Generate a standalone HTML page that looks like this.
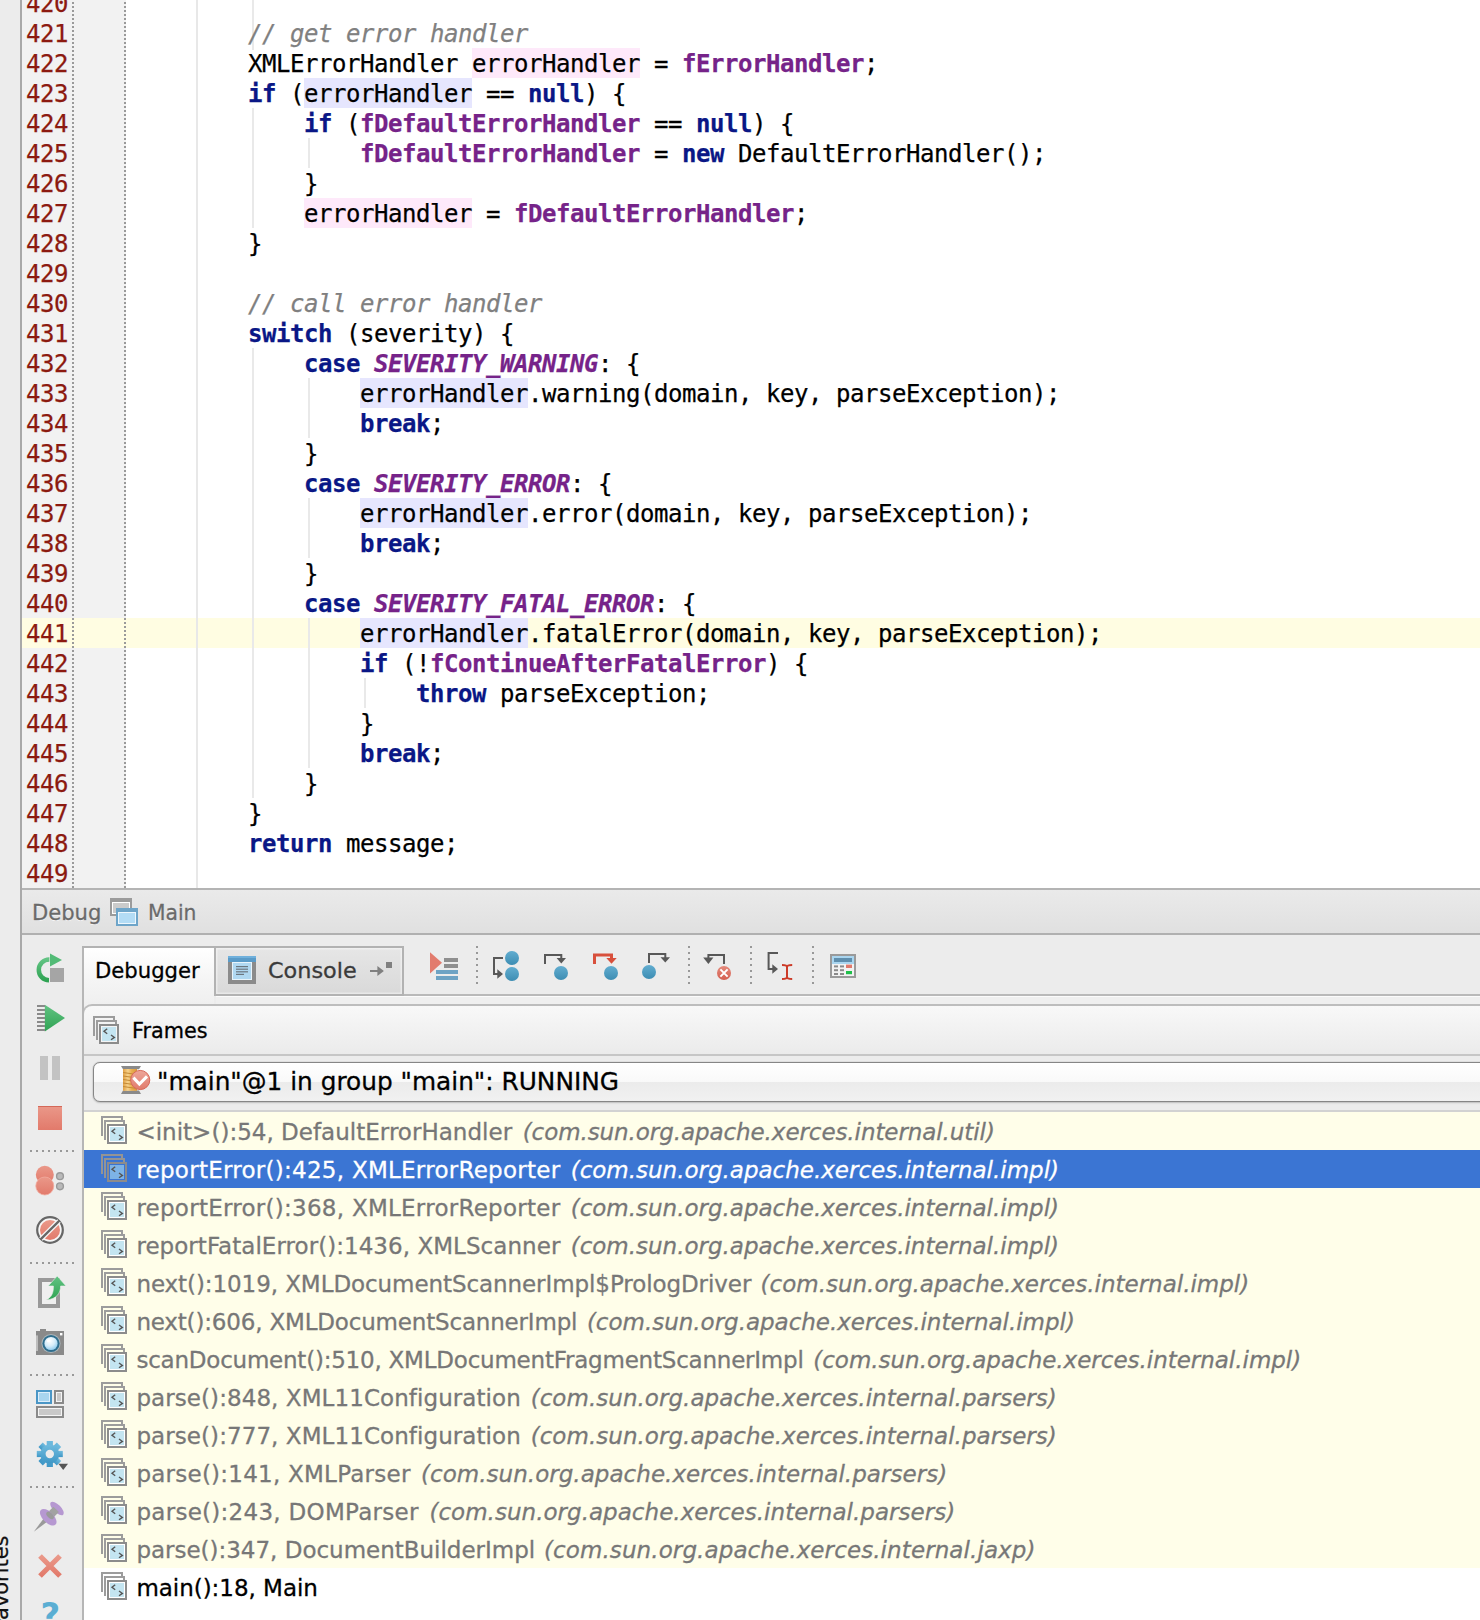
<!DOCTYPE html>
<html lang="en"><head><meta charset="utf-8"><title>Debug - Main</title>
<style>
html,body{margin:0;padding:0}
body{width:1480px;height:1620px;overflow:hidden;position:relative;background:#fff;font-family:"DejaVu Sans","Liberation Sans",sans-serif}
.abs,#root div,#root span.a,#root svg{position:absolute}
#root{position:absolute;left:0;top:0;width:1480px;height:1620px;overflow:hidden}
/* editor */
#strip{left:0;top:0;width:20px;height:1620px;background:#ececec}
#vborder{left:20px;top:0;width:2px;height:1620px;background:#a9a9a9}
#gutter{left:22px;top:0;width:104px;height:888px;background:#f2f2f2}
.dot{top:-2px;width:2px;height:890px;background:repeating-linear-gradient(to bottom,#9a9a9a 0,#9a9a9a 2px,transparent 2px,transparent 4px)}
#caret{left:22px;top:618px;width:1458px;height:30px;background:#fffde2}
#foldline{left:196px;top:0;width:2px;height:888px;background:#e8e8e8}
.ln,.cl{font-family:"DejaVu Sans Mono","Liberation Mono",monospace;font-size:24px;letter-spacing:-0.449px;line-height:30px;height:30px;white-space:pre;-webkit-text-stroke:0.25px}
.ln{left:26px;color:#8c1a10}
.cl{left:248px;color:#000}
.cl span{display:inline-block;height:29px;vertical-align:top;margin-top:-1px;padding-top:1px}
.k{color:#0a1786;font-weight:bold}
.f{color:#762389;font-weight:bold}
.s{color:#762389;font-weight:bold;font-style:italic}
.c{color:#808080;font-style:italic}
.w{background:#fee9fa}
.r{background:#e6e6fe}
.ig{width:2px;background:#e9e9e9}
#edborder{left:22px;top:888px;width:1458px;height:2px;background:#b4b4b4}
#dhead{left:22px;top:890px;width:1458px;height:43px;background:linear-gradient(#eaeaea,#e0e0e0)}
#dheadb{left:22px;top:933px;width:1458px;height:2px;background:#b0b0b0}
#pbg{left:22px;top:935px;width:1458px;height:685px;background:#ececec}
.ui{-webkit-text-stroke:0.3px;font-family:"DejaVu Sans","Liberation Sans",sans-serif;white-space:pre;transform-origin:0 50%;line-height:30px;height:30px}
.hd{font-size:22px;color:#6a6a6a;text-shadow:0 1px 0 #f8f8f8}
#tabs{left:82px;top:946px;width:322px;height:50px;box-sizing:border-box;border:2px solid #b2b2b2;background:linear-gradient(#e6e6e6,#d9d9d9)}
#tabA{left:84px;top:948px;width:130px;height:58px;background:linear-gradient(#ffffff,#f4f4f4 60%,#efefef)}
#tabAr{left:214px;top:948px;width:2px;height:46px;background:#b2b2b2}
#tbline{left:404px;top:994px;width:1076px;height:2px;background:#b9b9b9}
#tbline2{left:216px;top:996px;width:1264px;height:8px;background:linear-gradient(#fbfbfb 0,#fbfbfb 1.5px,#efefef 1.5px,#efefef 100%)}
#lborder{left:82px;top:948px;width:2px;height:672px;background:#b6b6b6}
#fhead{left:82px;top:1004px;width:1402px;height:52px;box-sizing:border-box;border:2px solid #bdbdbd;border-bottom-color:#c6c6c6;border-top-left-radius:10px;background:linear-gradient(#f8f8f8,#ebebeb)}
#combo{left:93px;top:1062px;width:1400px;height:40px;box-sizing:border-box;border:1px solid #868686;border-radius:7px;background:linear-gradient(#ffffff 0,#f9f9f9 50%,#ebebeb 50%,#f1f1f1 100%);box-shadow:0 0 1px #777,0 1px 2px rgba(0,0,0,.16)}
#listtop{left:84px;top:1110px;width:1396px;height:2px;background:#d2d2d2}
#list{left:84px;top:1112px;width:1396px;height:456px;background:#fffee9}
#listw{left:84px;top:1568px;width:1396px;height:52px;background:#fff}
#sel{left:84px;top:1150px;width:1396px;height:38px;background:#3b75d3}
.row{left:136.4px;height:38px;line-height:38px;font-size:23px;-webkit-text-stroke:0.3px;white-space:pre;color:#777;font-family:"DejaVu Sans","Liberation Sans",sans-serif}
.row i{font-style:oblique}
.hsep{left:30px;width:44px;height:2px;background:repeating-linear-gradient(to right,#999 0,#999 2px,transparent 2px,transparent 6px)}
.vsep{top:946px;width:2px;height:38px;background:repeating-linear-gradient(to bottom,#999 0,#999 2px,transparent 2px,transparent 6px)}
#fav{left:-12.3px;top:1657.1px;font-size:22px;color:#111;transform:rotate(-90deg) scaleX(0.95);transform-origin:0 0;white-space:pre;line-height:26px;height:26px;-webkit-text-stroke:0.3px}
#tabC{left:216px;top:948px;width:186px;height:46px;box-shadow:inset 0 0 0 1.5px rgba(255,255,255,.4)}

</style></head><body><div id="root">
<div id="gutter"></div>
<div id="caret"></div>
<div class="dot" style="left:72px"></div>
<div class="dot" style="left:124px"></div>
<div id="foldline"></div>
<div class="ig" style="left:252px;top:0;height:50px"></div>
<div class="ig" style="left:364px;top:678px;height:30px"></div>
<div class="ig" style="left:308px;top:618px;height:150px"></div>
<div class="ig" style="left:308px;top:498px;height:60px"></div>
<div class="ig" style="left:308px;top:378px;height:60px"></div>
<div class="ig" style="left:252px;top:348px;height:450px"></div>
<div class="ig" style="left:308px;top:138px;height:30px"></div>
<div class="ig" style="left:252px;top:108px;height:120px"></div>
<div class="ln" style="top:-11px">420</div>
<div class="ln" style="top:19px">421</div>
<div class="ln" style="top:49px">422</div>
<div class="ln" style="top:79px">423</div>
<div class="ln" style="top:109px">424</div>
<div class="ln" style="top:139px">425</div>
<div class="ln" style="top:169px">426</div>
<div class="ln" style="top:199px">427</div>
<div class="ln" style="top:229px">428</div>
<div class="ln" style="top:259px">429</div>
<div class="ln" style="top:289px">430</div>
<div class="ln" style="top:319px">431</div>
<div class="ln" style="top:349px">432</div>
<div class="ln" style="top:379px">433</div>
<div class="ln" style="top:409px">434</div>
<div class="ln" style="top:439px">435</div>
<div class="ln" style="top:469px">436</div>
<div class="ln" style="top:499px">437</div>
<div class="ln" style="top:529px">438</div>
<div class="ln" style="top:559px">439</div>
<div class="ln" style="top:589px">440</div>
<div class="ln" style="top:619px">441</div>
<div class="ln" style="top:649px">442</div>
<div class="ln" style="top:679px">443</div>
<div class="ln" style="top:709px">444</div>
<div class="ln" style="top:739px">445</div>
<div class="ln" style="top:769px">446</div>
<div class="ln" style="top:799px">447</div>
<div class="ln" style="top:829px">448</div>
<div class="ln" style="top:859px">449</div>
<div class="cl" style="top:19px"><span class="c">// get error handler</span></div>
<div class="cl" style="top:49px">XMLErrorHandler <span class="w">errorHandler</span> = <span class="f">fErrorHandler</span>;</div>
<div class="cl" style="top:79px"><span class="k">if</span> (<span class="r">errorHandler</span> == <span class="k">null</span>) {</div>
<div class="cl" style="top:109px">    <span class="k">if</span> (<span class="f">fDefaultErrorHandler</span> == <span class="k">null</span>) {</div>
<div class="cl" style="top:139px">        <span class="f">fDefaultErrorHandler</span> = <span class="k">new</span> DefaultErrorHandler();</div>
<div class="cl" style="top:169px">    }</div>
<div class="cl" style="top:199px">    <span class="w">errorHandler</span> = <span class="f">fDefaultErrorHandler</span>;</div>
<div class="cl" style="top:229px">}</div>
<div class="cl" style="top:289px"><span class="c">// call error handler</span></div>
<div class="cl" style="top:319px"><span class="k">switch</span> (severity) {</div>
<div class="cl" style="top:349px">    <span class="k">case</span> <span class="s">SEVERITY_WARNING</span>: {</div>
<div class="cl" style="top:379px">        <span class="r">errorHandler</span>.warning(domain, key, parseException);</div>
<div class="cl" style="top:409px">        <span class="k">break</span>;</div>
<div class="cl" style="top:439px">    }</div>
<div class="cl" style="top:469px">    <span class="k">case</span> <span class="s">SEVERITY_ERROR</span>: {</div>
<div class="cl" style="top:499px">        <span class="r">errorHandler</span>.error(domain, key, parseException);</div>
<div class="cl" style="top:529px">        <span class="k">break</span>;</div>
<div class="cl" style="top:559px">    }</div>
<div class="cl" style="top:589px">    <span class="k">case</span> <span class="s">SEVERITY_FATAL_ERROR</span>: {</div>
<div class="cl" style="top:619px">        <span class="r">errorHandler</span>.fatalError(domain, key, parseException);</div>
<div class="cl" style="top:649px">        <span class="k">if</span> (!<span class="f">fContinueAfterFatalError</span>) {</div>
<div class="cl" style="top:679px">            <span class="k">throw</span> parseException;</div>
<div class="cl" style="top:709px">        }</div>
<div class="cl" style="top:739px">        <span class="k">break</span>;</div>
<div class="cl" style="top:769px">    }</div>
<div class="cl" style="top:799px">}</div>
<div class="cl" style="top:829px"><span class="k">return</span> message;</div>
<div id="edborder"></div><div id="dhead"></div><div id="dheadb"></div><div id="pbg"></div>
<div class="ui hd" id="t_debug" style="transform:scaleX(0.9591);left:32px;top:898px">Debug</div>
<svg style="left:108px;top:896px" width="32" height="32" viewBox="108 896 32 32">
<rect x="111" y="899" width="20" height="16" fill="#fff" stroke="#9b9b9b" stroke-width="2"/><rect x="110" y="898" width="22" height="4" fill="#9b9b9b"/><rect x="113" y="903" width="16" height="10" fill="#cbcbcb"/>
<rect x="117" y="909" width="20" height="16" fill="#eef7fd" stroke="#6ea5c9" stroke-width="2"/><rect x="116" y="908" width="22" height="4" fill="#6ea5c9"/><rect x="119" y="913" width="16" height="10" fill="#b3dcf5"/>
</svg>
<div class="ui hd" id="t_main" style="transform:scaleX(0.9233);left:148px;top:898px">Main</div>
<div id="tbline"></div><div id="tbline2"></div>
<div id="tabs"></div><div id="tabC"></div><div id="tabA"></div><div id="tabAr"></div>
<div class="ui" id="t_debugger" style="transform:scaleX(0.9623);left:95px;top:956px;font-size:22px;color:#000">Debugger</div>
<svg style="left:226px;top:954px" width="32" height="32" viewBox="226 954 32 32">
<rect x="228" y="956" width="28" height="28" fill="#8b8b8b"/><rect x="228" y="956" width="28" height="6" fill="#5a9bc8"/><rect x="228" y="956" width="28" height="2" fill="#6fb0dc"/>
<rect x="232" y="962" width="20" height="18" fill="#e8f4fb"/><rect x="233" y="963" width="18" height="16" fill="#b0d8f1"/>
<g fill="#6c7780"><rect x="236" y="966" width="12" height="1.2"/><rect x="236" y="968.6" width="12" height="1.2"/><rect x="236" y="971.2" width="12" height="1.2"/><rect x="236" y="973.8" width="8" height="1.2"/></g>
</svg>
<div class="ui" id="t_console" style="transform:scaleX(1.0155);left:267.5px;top:956px;font-size:22px;color:#3a3a3a">Console</div>
<svg style="left:368px;top:958px" width="28" height="22" viewBox="368 958 28 22">
<path d="M370 971H379" stroke="#808080" stroke-width="2" fill="none"/><path d="M377.4 966L383.9 971L377.4 976Z" fill="#808080"/><rect x="386" y="962" width="6" height="6" fill="#808080"/></svg>
<svg style="left:426px;top:944px" width="440" height="44" viewBox="426 944 440 44">
<defs>
<linearGradient id="gb" x1="0" y1="0" x2="0" y2="1"><stop offset="0" stop-color="#62add0"/><stop offset="1" stop-color="#3d8db3"/></linearGradient>
<linearGradient id="gr" x1="0" y1="0" x2="0" y2="1"><stop offset="0" stop-color="#e58a7c"/><stop offset="1" stop-color="#d45f50"/></linearGradient>
</defs>
<path d="M430 952.3L442 962.8L430 973.4Z" fill="#e27c6e"/>
<rect x="444" y="958" width="14" height="4" fill="#8f8f8f"/><rect x="444" y="964" width="14" height="4" fill="#8f8f8f"/>
<rect x="436" y="970" width="22" height="4" fill="#6ea3c4"/><rect x="436" y="976" width="22" height="4" fill="#6ea3c4"/>
<!-- step over -->
<circle cx="512" cy="958" r="7" fill="url(#gb)"/><circle cx="512" cy="974" r="7" fill="url(#gb)"/>
<path d="M503 958H494V974H498" stroke="#585858" stroke-width="2" fill="none"/><path d="M497.3 969.3L503 974L497.3 978.7Z" fill="#585858"/>
<!-- step into -->
<circle cx="561" cy="973" r="7" fill="url(#gb)"/>
<path d="M545 964V955H561.3V959" stroke="#585858" stroke-width="2" fill="none"/><path d="M556.6 958L566 958L561.3 963.4Z" fill="#585858"/>
<!-- force step into -->
<circle cx="611" cy="973" r="7" fill="url(#gb)"/>
<path d="M594.5 964V955H611.5V959" stroke="#d8503c" stroke-width="3" fill="none"/><path d="M606.3 958L616.7 958L611.5 963.8Z" fill="#d8503c"/>
<!-- step out -->
<circle cx="649" cy="972" r="7" fill="url(#gb)"/>
<path d="M649 963V954H665.3V958" stroke="#585858" stroke-width="2" fill="none"/><path d="M660.5 957.2L670 957.2L665.3 962.6Z" fill="#585858"/>
<!-- drop frame -->
<path d="M724 964V955H708.4V959" stroke="#585858" stroke-width="2" fill="none"/><path d="M703.2 957.6L713.4 957.6L708.4 964Z" fill="#585858"/>
<circle cx="724" cy="973" r="7" fill="url(#gr)"/><path d="M720.4 969.4L727.6 976.6M727.6 969.4L720.4 976.6" stroke="#fff" stroke-width="2"/>
<!-- run to cursor -->
<path d="M778 953H768.6V969H773" stroke="#585858" stroke-width="2" fill="none"/><path d="M772.3 964.2L778 969L772.3 973.8Z" fill="#585858"/>
<path d="M782 965C785 965 787 965.5 787 967V977C787 978.5 785 979 782 979M792.2 965C789 965 787 965.5 787 967M787 977C787 978.5 789 979 792.2 979" stroke="#cc3b28" stroke-width="2" fill="none"/>
<!-- calculator -->
<rect x="831" y="955" width="24" height="22" fill="#f2f2f2" stroke="#9a9a9a" stroke-width="2"/>
<rect x="832" y="956" width="22" height="8" fill="#a9d5ef"/><rect x="834" y="958" width="18" height="4" fill="#5f8fae"/>
<g fill="#8a8a8a"><rect x="834" y="965.4" width="4" height="2"/><rect x="840" y="965.4" width="4" height="2"/><rect x="834" y="969.2" width="4" height="2"/><rect x="840" y="969.2" width="4" height="2"/><rect x="834" y="973" width="4" height="2"/><rect x="840" y="973" width="4" height="2"/></g>
<rect x="846" y="964.6" width="6" height="3.4" fill="#e0796b"/><rect x="846" y="971" width="6" height="3.2" fill="#1fbf4a"/>
</svg>
<div class="vsep" style="left:476px"></div>
<div class="vsep" style="left:688px"></div>
<div class="vsep" style="left:750px"></div>
<div class="vsep" style="left:812px"></div>
<svg style="left:22px;top:940px" width="60" height="680" viewBox="22 940 60 680">
<defs>
<linearGradient id="gg" x1="0" y1="0" x2="0" y2="1"><stop offset="0" stop-color="#62c383"/><stop offset="1" stop-color="#2fa353"/></linearGradient>
<linearGradient id="gs" x1="0" y1="0" x2="0" y2="1"><stop offset="0" stop-color="#ea9889"/><stop offset="1" stop-color="#e27a6b"/></linearGradient>
<linearGradient id="gbl" x1="0" y1="0" x2="0" y2="1"><stop offset="0" stop-color="#70bbde"/><stop offset="1" stop-color="#3f97c6"/></linearGradient>
<radialGradient id="glens" cx=".4" cy=".3" r=".8"><stop offset="0" stop-color="#ffffff"/><stop offset=".5" stop-color="#d6edfa"/><stop offset="1" stop-color="#7fc3ea"/></radialGradient>
</defs>
<!-- rerun -->
<path d="M49.4 959.5A10.4 10.4 0 1 0 49 980.3" stroke="url(#gg)" stroke-width="4.5" fill="none"/>
<path d="M50 953.6V966.4L62 959.9Z" fill="#52bb76"/>
<rect x="50" y="968" width="14" height="14" fill="#a5a5a5"/>
<!-- resume -->
<path d="M44.8 1004.8V1031.4L65 1018Z" fill="url(#gg)"/>
<g fill="#8a8a8a"><rect x="37" y="1005" width="8" height="2"/><rect x="37" y="1009" width="8" height="2"/><rect x="37" y="1013" width="8" height="2"/><rect x="37" y="1017" width="8" height="2"/><rect x="37" y="1021" width="8" height="2"/><rect x="37" y="1025" width="8" height="2"/><rect x="37" y="1029" width="8" height="2"/></g>
<!-- pause -->
<rect x="40" y="1056" width="8" height="24" fill="#c3c3c3"/><rect x="52" y="1056" width="8" height="24" fill="#c3c3c3"/>
<!-- stop -->
<rect x="38" y="1106" width="24" height="24" fill="url(#gs)"/><rect x="38" y="1106" width="24" height="1" fill="#d46858"/>
<!-- view breakpoints -->
<circle cx="44.8" cy="1174.8" r="9" fill="url(#gs)"/><circle cx="44.8" cy="1186" r="9" fill="url(#gs)" stroke="#f1aca0" stroke-width=".8"/>
<circle cx="60" cy="1176.2" r="3.4" fill="#b9b9b9" stroke="#999" stroke-width="1.4"/><circle cx="60" cy="1186.3" r="3.4" fill="#b9b9b9" stroke="#999" stroke-width="1.4"/>
<!-- mute breakpoints -->
<circle cx="50" cy="1230" r="12.8" fill="#f6f6f6" stroke="#666" stroke-width="2.2"/><circle cx="50" cy="1230" r="10" fill="url(#gs)"/>
<path d="M41 1239L59 1221" stroke="#f6f6f6" stroke-width="5"/><path d="M40.6 1239.4L59.4 1220.6" stroke="#666" stroke-width="2.2"/>
<!-- thread dump -->
<rect x="40" y="1280" width="18" height="26" fill="#efefef" stroke="#999" stroke-width="4"/>
<path d="M57.2 1276L66 1286H60.6C60.6 1293 57 1299 46 1300C51.5 1297.5 53.6 1293 53.4 1286H48.2Z" fill="url(#gg)" stroke="#eee" stroke-width=".6"/>
<!-- camera -->
<rect x="40" y="1329" width="6" height="3" fill="#8a8a8a"/><rect x="36" y="1331" width="28" height="24" fill="#8a8a8a"/><rect x="36" y="1335.4" width="2" height="15.6" fill="#bdbdbd"/><rect x="60" y="1333" width="2.4" height="2.4" fill="#fff"/>
<circle cx="51" cy="1343.5" r="9.6" fill="#aab4b9"/><circle cx="51" cy="1343.5" r="8.6" fill="#2f6e8e"/><circle cx="51" cy="1343.5" r="6.6" fill="url(#glens)"/><circle cx="48.4" cy="1340.8" r="1.5" fill="#fff"/>
<!-- layout -->
<rect x="37" y="1391" width="14" height="12" fill="#ddeefa" stroke="#4a96c6" stroke-width="2"/><rect x="39" y="1393" width="10" height="8" fill="#a9d5ef"/><rect x="38" y="1393" width="12" height="8" fill="none" stroke="#fff" stroke-width="0"/>
<rect x="55" y="1391" width="8" height="12" fill="#f4f4f4" stroke="#8a8a8a" stroke-width="2"/><rect x="57" y="1393" width="4" height="8" fill="#c9c9c9"/>
<rect x="37" y="1407" width="26" height="10" fill="#f4f4f4" stroke="#8a8a8a" stroke-width="2"/><rect x="39" y="1409" width="22" height="6" fill="#c9c9c9"/>
<!-- gear -->
<g transform="translate(49.8 1454)" fill="url(#gbl)">
<g id="teeth"><rect x="-3.1" y="-13" width="6.2" height="26"/><rect x="-13" y="-3.1" width="26" height="6.2"/><rect x="-3.1" y="-13" width="6.2" height="26" transform="rotate(45)"/><rect x="-13" y="-3.1" width="26" height="6.2" transform="rotate(45)"/></g>
<circle r="9.4"/><circle r="4.2" fill="#ececec"/></g>
<path d="M58.4 1463.8H68L63.2 1470Z" fill="#555"/>
<!-- pin -->
<g transform="translate(50.5 1515) rotate(45)">
<path d="M-2.6 6L0 23.6L2.6 6Z" fill="#9a9a9a"/>
<ellipse cx="0" cy="-9.2" rx="8.8" ry="3.9" fill="#b698d1"/>
<rect x="-3.8" y="-8" width="7.6" height="9" fill="#a2a2a2"/>
<ellipse cx="0" cy="3.2" rx="10.4" ry="5.4" fill="#b698d1"/><ellipse cx="0" cy="0.6" rx="4.6" ry="2.6" fill="#9a9a9a"/>
</g>
<!-- close -->
<path d="M40 1556L60 1576M60 1556L40 1576" stroke="url(#gs)" stroke-width="5.2"/>
</svg>
<div id="help" style="left:40.5px;top:1594.5px;font-size:34px;font-weight:bold;color:#5aaed3;line-height:40px;height:40px">?</div>
<div class="hsep" style="top:1150px"></div>
<div class="hsep" style="top:1262px"></div>
<div class="hsep" style="top:1374px"></div>
<div class="hsep" style="top:1486px"></div>
<div id="fhead"></div><div id="lborder"></div>
<svg style="left:92px;top:1015px" width="30" height="32" viewBox="0 0 30 32"><path d="M2 21V2H22V5" stroke="#9c9c9c" stroke-width="2" fill="none"/><path d="M5 25V6H24V9" stroke="#9c9c9c" stroke-width="2" fill="none"/><rect x="8" y="10" width="18" height="18" fill="#f4f4f4" stroke="#8c8c8c" stroke-width="2"/><rect x="10" y="12" width="14" height="14" fill="#c4e5f1"/><path d="M15.2 13.8L12 16.3L15.2 18.8M19 20L22.4 22.4L19 24.8" stroke="#555" stroke-width="1.4" fill="none"/></svg>
<div class="ui" id="t_frames" style="transform:scaleX(0.9448);left:131.5px;top:1016px;font-size:22px;color:#000">Frames</div>
<div id="combo"></div>
<svg style="left:118px;top:1064px" width="36" height="34" viewBox="118 1064 36 34">
<defs><linearGradient id="gt" x1="0" y1="0" x2="1" y2="0"><stop offset="0" stop-color="#e2a043"/><stop offset=".35" stop-color="#f6d28c"/><stop offset=".6" stop-color="#eab052"/><stop offset="1" stop-color="#d8963a"/></linearGradient>
<linearGradient id="gc" x1="0" y1="0" x2="0" y2="1"><stop offset="0" stop-color="#eda79b"/><stop offset="1" stop-color="#e17b6c"/></linearGradient></defs>
<path d="M121 1066H141L139 1069.2H123Z" fill="#8a8a8a"/><path d="M123 1090.6H139L141 1094H121Z" fill="#8a8a8a"/>
<rect x="123" y="1069" width="14" height="21.8" fill="url(#gt)"/>
<path d="M123 1072.5L137 1074.5M123 1076L137 1078M123 1079.5L137 1081.5M123 1083L137 1085M123 1086.5L137 1088.5" stroke="#c48a35" stroke-width="1"/>
<circle cx="140.2" cy="1080" r="9.6" fill="url(#gc)" stroke="#d8695a" stroke-width="1"/>
<path d="M133.4 1077.6L139.4 1084L147 1076.4" stroke="#fff" stroke-width="3" fill="none"/>
</svg>
<div class="ui" id="t_thread" style="transform:scaleX(0.9721);left:157px;top:1064px;font-size:25.5px;color:#000;line-height:34px;height:34px">"main"@1 in group "main": RUNNING</div>
<div id="listtop"></div><div id="list"></div><div id="listw"></div><div id="sel"></div>
<svg style="left:100px;top:1115px" width="30" height="32" viewBox="0 0 30 32"><path d="M2 21V2H22V5" stroke="#9c9c9c" stroke-width="2" fill="none"/><path d="M5 25V6H24V9" stroke="#9c9c9c" stroke-width="2" fill="none"/><rect x="8" y="10" width="18" height="18" fill="#ffffff" stroke="#8c8c8c" stroke-width="2"/><rect x="10" y="12" width="14" height="14" fill="#c4e5f1"/><path d="M15.2 13.8L12 16.3L15.2 18.8M19 20L22.4 22.4L19 24.8" stroke="#555" stroke-width="1.4" fill="none"/></svg>
<div class="row" style="top:1113px;color:#777"><span class="a" id="ra0" style="left:0;top:0;letter-spacing:0.017px">&lt;init&gt;():54, DefaultErrorHandler</span><i class="a" id="rb0" style="position:absolute;left:386.3px;top:0;letter-spacing:-0.08px">(com.sun.org.apache.xerces.internal.util)</i></div>
<svg style="left:100px;top:1153px" width="30" height="32" viewBox="0 0 30 32"><path d="M2 21V2H22V5" stroke="#949494" stroke-width="2" fill="none"/><path d="M5 25V6H24V9" stroke="#949494" stroke-width="2" fill="none"/><rect x="8" y="10" width="18" height="18" fill="#3b75d3" stroke="#8c8c8c" stroke-width="2"/><rect x="10" y="12" width="14" height="14" fill="#7db3e6"/><path d="M15.2 13.8L12 16.3L15.2 18.8M19 20L22.4 22.4L19 24.8" stroke="#555" stroke-width="1.4" fill="none"/></svg>
<div class="row" style="top:1151px;color:#fff"><span class="a" id="ra1" style="left:0;top:0;letter-spacing:0.261px">reportError():425, XMLErrorReporter</span><i class="a" id="rb1" style="position:absolute;left:434.3px;top:0;letter-spacing:-0.012px">(com.sun.org.apache.xerces.internal.impl)</i></div>
<svg style="left:100px;top:1191px" width="30" height="32" viewBox="0 0 30 32"><path d="M2 21V2H22V5" stroke="#9c9c9c" stroke-width="2" fill="none"/><path d="M5 25V6H24V9" stroke="#9c9c9c" stroke-width="2" fill="none"/><rect x="8" y="10" width="18" height="18" fill="#ffffff" stroke="#8c8c8c" stroke-width="2"/><rect x="10" y="12" width="14" height="14" fill="#c4e5f1"/><path d="M15.2 13.8L12 16.3L15.2 18.8M19 20L22.4 22.4L19 24.8" stroke="#555" stroke-width="1.4" fill="none"/></svg>
<div class="row" style="top:1189px;color:#777"><span class="a" id="ra2" style="left:0;top:0;letter-spacing:0.261px">reportError():368, XMLErrorReporter</span><i class="a" id="rb2" style="position:absolute;left:434.3px;top:0;letter-spacing:-0.012px">(com.sun.org.apache.xerces.internal.impl)</i></div>
<svg style="left:100px;top:1229px" width="30" height="32" viewBox="0 0 30 32"><path d="M2 21V2H22V5" stroke="#9c9c9c" stroke-width="2" fill="none"/><path d="M5 25V6H24V9" stroke="#9c9c9c" stroke-width="2" fill="none"/><rect x="8" y="10" width="18" height="18" fill="#ffffff" stroke="#8c8c8c" stroke-width="2"/><rect x="10" y="12" width="14" height="14" fill="#c4e5f1"/><path d="M15.2 13.8L12 16.3L15.2 18.8M19 20L22.4 22.4L19 24.8" stroke="#555" stroke-width="1.4" fill="none"/></svg>
<div class="row" style="top:1227px;color:#777"><span class="a" id="ra3" style="left:0;top:0;letter-spacing:0.046px">reportFatalError():1436, XMLScanner</span><i class="a" id="rb3" style="position:absolute;left:434.3px;top:0;letter-spacing:-0.012px">(com.sun.org.apache.xerces.internal.impl)</i></div>
<svg style="left:100px;top:1267px" width="30" height="32" viewBox="0 0 30 32"><path d="M2 21V2H22V5" stroke="#9c9c9c" stroke-width="2" fill="none"/><path d="M5 25V6H24V9" stroke="#9c9c9c" stroke-width="2" fill="none"/><rect x="8" y="10" width="18" height="18" fill="#ffffff" stroke="#8c8c8c" stroke-width="2"/><rect x="10" y="12" width="14" height="14" fill="#c4e5f1"/><path d="M15.2 13.8L12 16.3L15.2 18.8M19 20L22.4 22.4L19 24.8" stroke="#555" stroke-width="1.4" fill="none"/></svg>
<div class="row" style="top:1265px;color:#777"><span class="a" id="ra4" style="left:0;top:0;letter-spacing:-0.077px">next():1019, XMLDocumentScannerImpl$PrologDriver</span><i class="a" id="rb4" style="position:absolute;left:624.2px;top:0;letter-spacing:-0.005px">(com.sun.org.apache.xerces.internal.impl)</i></div>
<svg style="left:100px;top:1305px" width="30" height="32" viewBox="0 0 30 32"><path d="M2 21V2H22V5" stroke="#9c9c9c" stroke-width="2" fill="none"/><path d="M5 25V6H24V9" stroke="#9c9c9c" stroke-width="2" fill="none"/><rect x="8" y="10" width="18" height="18" fill="#ffffff" stroke="#8c8c8c" stroke-width="2"/><rect x="10" y="12" width="14" height="14" fill="#c4e5f1"/><path d="M15.2 13.8L12 16.3L15.2 18.8M19 20L22.4 22.4L19 24.8" stroke="#555" stroke-width="1.4" fill="none"/></svg>
<div class="row" style="top:1303px;color:#777"><span class="a" id="ra5" style="left:0;top:0;letter-spacing:-0.18px">next():606, XMLDocumentScannerImpl</span><i class="a" id="rb5" style="position:absolute;left:450.5px;top:0;letter-spacing:-0.019px">(com.sun.org.apache.xerces.internal.impl)</i></div>
<svg style="left:100px;top:1343px" width="30" height="32" viewBox="0 0 30 32"><path d="M2 21V2H22V5" stroke="#9c9c9c" stroke-width="2" fill="none"/><path d="M5 25V6H24V9" stroke="#9c9c9c" stroke-width="2" fill="none"/><rect x="8" y="10" width="18" height="18" fill="#ffffff" stroke="#8c8c8c" stroke-width="2"/><rect x="10" y="12" width="14" height="14" fill="#c4e5f1"/><path d="M15.2 13.8L12 16.3L15.2 18.8M19 20L22.4 22.4L19 24.8" stroke="#555" stroke-width="1.4" fill="none"/></svg>
<div class="row" style="top:1341px;color:#777"><span class="a" id="ra6" style="left:0;top:0;letter-spacing:-0.224px">scanDocument():510, XMLDocumentFragmentScannerImpl</span><i class="a" id="rb6" style="position:absolute;left:676.9px;top:0;letter-spacing:-0.022px">(com.sun.org.apache.xerces.internal.impl)</i></div>
<svg style="left:100px;top:1381px" width="30" height="32" viewBox="0 0 30 32"><path d="M2 21V2H22V5" stroke="#9c9c9c" stroke-width="2" fill="none"/><path d="M5 25V6H24V9" stroke="#9c9c9c" stroke-width="2" fill="none"/><rect x="8" y="10" width="18" height="18" fill="#ffffff" stroke="#8c8c8c" stroke-width="2"/><rect x="10" y="12" width="14" height="14" fill="#c4e5f1"/><path d="M15.2 13.8L12 16.3L15.2 18.8M19 20L22.4 22.4L19 24.8" stroke="#555" stroke-width="1.4" fill="none"/></svg>
<div class="row" style="top:1379px;color:#777"><span class="a" id="ra7" style="left:0;top:0;letter-spacing:0.075px">parse():848, XML11Configuration</span><i class="a" id="rb7" style="position:absolute;left:394.3px;top:0;letter-spacing:0.033px">(com.sun.org.apache.xerces.internal.parsers)</i></div>
<svg style="left:100px;top:1419px" width="30" height="32" viewBox="0 0 30 32"><path d="M2 21V2H22V5" stroke="#9c9c9c" stroke-width="2" fill="none"/><path d="M5 25V6H24V9" stroke="#9c9c9c" stroke-width="2" fill="none"/><rect x="8" y="10" width="18" height="18" fill="#ffffff" stroke="#8c8c8c" stroke-width="2"/><rect x="10" y="12" width="14" height="14" fill="#c4e5f1"/><path d="M15.2 13.8L12 16.3L15.2 18.8M19 20L22.4 22.4L19 24.8" stroke="#555" stroke-width="1.4" fill="none"/></svg>
<div class="row" style="top:1417px;color:#777"><span class="a" id="ra8" style="left:0;top:0;letter-spacing:0.075px">parse():777, XML11Configuration</span><i class="a" id="rb8" style="position:absolute;left:394.3px;top:0;letter-spacing:0.033px">(com.sun.org.apache.xerces.internal.parsers)</i></div>
<svg style="left:100px;top:1457px" width="30" height="32" viewBox="0 0 30 32"><path d="M2 21V2H22V5" stroke="#9c9c9c" stroke-width="2" fill="none"/><path d="M5 25V6H24V9" stroke="#9c9c9c" stroke-width="2" fill="none"/><rect x="8" y="10" width="18" height="18" fill="#ffffff" stroke="#8c8c8c" stroke-width="2"/><rect x="10" y="12" width="14" height="14" fill="#c4e5f1"/><path d="M15.2 13.8L12 16.3L15.2 18.8M19 20L22.4 22.4L19 24.8" stroke="#555" stroke-width="1.4" fill="none"/></svg>
<div class="row" style="top:1455px;color:#777"><span class="a" id="ra9" style="left:0;top:0;letter-spacing:0.241px">parse():141, XMLParser</span><i class="a" id="rb9" style="position:absolute;left:284.6px;top:0;letter-spacing:0.033px">(com.sun.org.apache.xerces.internal.parsers)</i></div>
<svg style="left:100px;top:1495px" width="30" height="32" viewBox="0 0 30 32"><path d="M2 21V2H22V5" stroke="#9c9c9c" stroke-width="2" fill="none"/><path d="M5 25V6H24V9" stroke="#9c9c9c" stroke-width="2" fill="none"/><rect x="8" y="10" width="18" height="18" fill="#ffffff" stroke="#8c8c8c" stroke-width="2"/><rect x="10" y="12" width="14" height="14" fill="#c4e5f1"/><path d="M15.2 13.8L12 16.3L15.2 18.8M19 20L22.4 22.4L19 24.8" stroke="#555" stroke-width="1.4" fill="none"/></svg>
<div class="row" style="top:1493px;color:#777"><span class="a" id="ra10" style="left:0;top:0;letter-spacing:0.28px">parse():243, DOMParser</span><i class="a" id="rb10" style="position:absolute;left:293.0px;top:0;letter-spacing:0.024px">(com.sun.org.apache.xerces.internal.parsers)</i></div>
<svg style="left:100px;top:1533px" width="30" height="32" viewBox="0 0 30 32"><path d="M2 21V2H22V5" stroke="#9c9c9c" stroke-width="2" fill="none"/><path d="M5 25V6H24V9" stroke="#9c9c9c" stroke-width="2" fill="none"/><rect x="8" y="10" width="18" height="18" fill="#ffffff" stroke="#8c8c8c" stroke-width="2"/><rect x="10" y="12" width="14" height="14" fill="#c4e5f1"/><path d="M15.2 13.8L12 16.3L15.2 18.8M19 20L22.4 22.4L19 24.8" stroke="#555" stroke-width="1.4" fill="none"/></svg>
<div class="row" style="top:1531px;color:#777"><span class="a" id="ra11" style="left:0;top:0;letter-spacing:-0.015px">parse():347, DocumentBuilderImpl</span><i class="a" id="rb11" style="position:absolute;left:407.6px;top:0;letter-spacing:0.095px">(com.sun.org.apache.xerces.internal.jaxp)</i></div>
<svg style="left:100px;top:1571px" width="30" height="32" viewBox="0 0 30 32"><path d="M2 21V2H22V5" stroke="#9c9c9c" stroke-width="2" fill="none"/><path d="M5 25V6H24V9" stroke="#9c9c9c" stroke-width="2" fill="none"/><rect x="8" y="10" width="18" height="18" fill="#ffffff" stroke="#8c8c8c" stroke-width="2"/><rect x="10" y="12" width="14" height="14" fill="#c4e5f1"/><path d="M15.2 13.8L12 16.3L15.2 18.8M19 20L22.4 22.4L19 24.8" stroke="#555" stroke-width="1.4" fill="none"/></svg>
<div class="row" style="top:1569px;color:#000"><span class="a" id="ra12" style="left:0;top:0;letter-spacing:-0.031px">main():18, Main</span></div>
<div id="strip"></div>
<div id="fav">2: Favorites</div>
<div id="vborder"></div>
</div></body></html>
